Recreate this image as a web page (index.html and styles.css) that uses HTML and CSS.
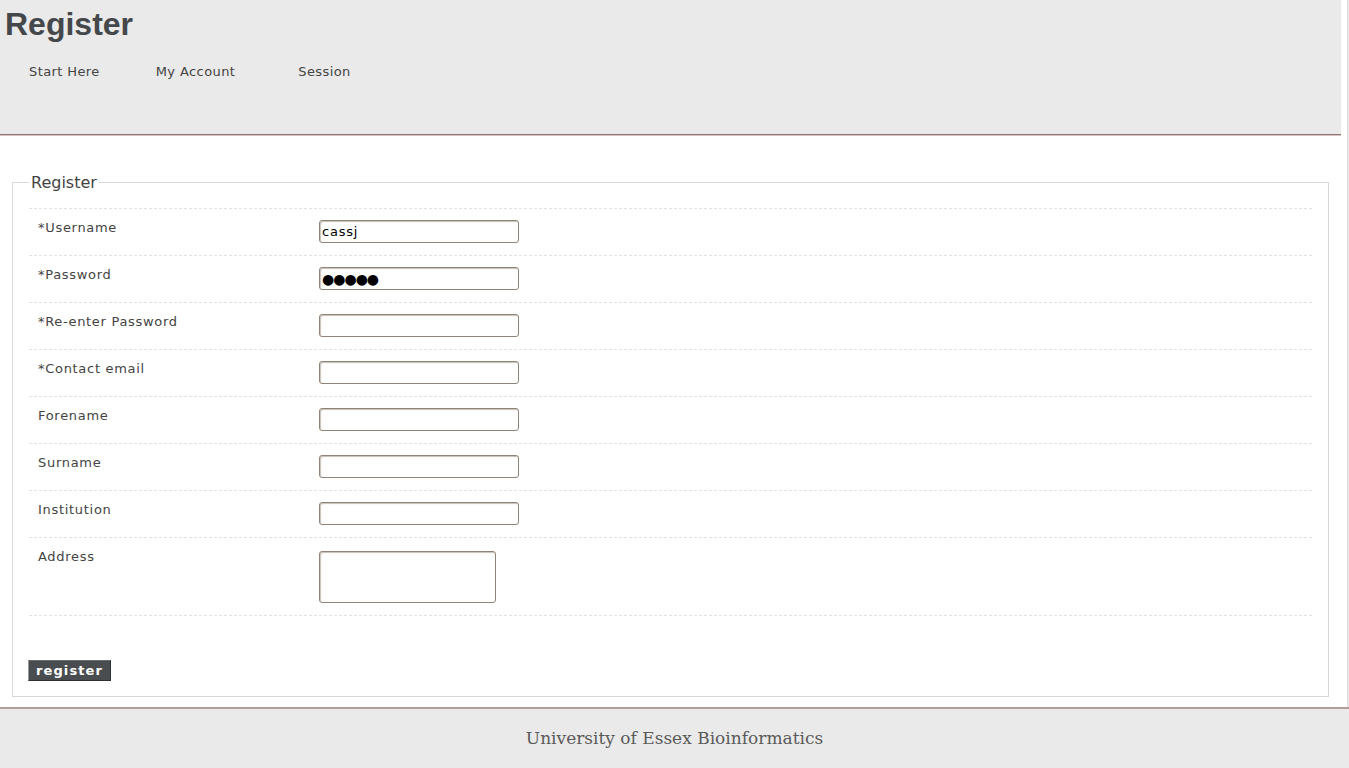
FILE: index.html
```html
<!DOCTYPE html>
<html lang="en">
<head>
<meta charset="utf-8">
<title>Register</title>
<link rel="stylesheet" href="styles.css">
</head>
<body>
<div class="page">
  <header class="masthead">
    <h1 class="site-title">Register</h1>
    <nav class="nav">
      <a class="nav-item" href="#">Start Here</a>
      <a class="nav-item nav-account" href="#">My Account</a>
      <a class="nav-item nav-session" href="#">Session</a>
    </nav>
  </header>
  <main class="content">
    <form class="register-form" onsubmit="return false">
      <fieldset class="panel">
        <legend class="panel-title">Register</legend>
        <div class="rows">
          <div class="row"><label class="row-label" for="u">*Username</label><input class="field" id="u" type="text" value="cassj"></div>
          <div class="row"><label class="row-label" for="p">*Password</label><input class="field field-pass" id="p" type="text" value="●●●●●"></div>
          <div class="row"><label class="row-label" for="p2">*Re-enter Password</label><input class="field" id="p2" type="text"></div>
          <div class="row"><label class="row-label" for="e">*Contact email</label><input class="field" id="e" type="text"></div>
          <div class="row"><label class="row-label" for="f">Forename</label><input class="field" id="f" type="text"></div>
          <div class="row"><label class="row-label" for="s">Surname</label><input class="field" id="s" type="text"></div>
          <div class="row"><label class="row-label" for="i">Institution</label><input class="field" id="i" type="text"></div>
          <div class="row row-last"><label class="row-label" for="a">Address</label><textarea class="area" id="a"></textarea></div>
        </div>
        <button class="submit" type="submit">register</button>
      </fieldset>
    </form>
  </main>
</div>
<footer class="footer">University of Essex Bioinformatics</footer>
</body>
</html>
```

FILE: styles.css
```css
html, body {
  margin: 0;
  padding: 0;
  background: #eaeaea;
}
body {
  font-family: "DejaVu Sans", sans-serif;
  color: #444;
}
.page {
  background: #fff;
  border-right: 1px solid #dcdcdc;
  width: 1348px;
  box-sizing: border-box;
}
.masthead {
  background: #eaeaea;
  height: 134px;
  margin-right: 6px;
  border-bottom: 1px solid #8f7676;
  box-shadow: 0 1px 0 #d8c4c4;
}
.site-title {
  margin: 0;
  padding: 6px 0 0 5px;
  font-family: "Liberation Sans", Arial, sans-serif;
  font-weight: bold;
  font-size: 32px;
  line-height: 37px;
  color: #45484b;
}
.nav {
  display: flex;
  margin: 19px 0 0 29px;
  line-height: 20px;
}
.nav-item {
  font-size: 13px;
  letter-spacing: 0.4px;
  color: #444;
  text-decoration: none;
}
.nav-account { margin-left: 56px; }
.nav-session { margin-left: 63px; }
.content {
  padding: 38px 18px 10px 12px;
}
.register-form { margin: 0; }
.panel {
  margin: 0;
  padding: 0 16px 15px 16px;
  border: 1px solid #d8d8d8;
}
.panel-title {
  padding: 0 2px;
  font-size: 16px;
  line-height: 19px;
  color: #444;
}
.rows {
  margin-top: 16px;
  margin-bottom: 44px;
  border-bottom: 1px dashed #e2e2e2;
}
.row {
  display: flex;
  align-items: flex-start;
  border-top: 1px dashed #e2e2e2;
  padding: 11px 0 12px 0;
}
.row-label {
  width: 281px;
  padding-left: 9px;
  font-size: 13px;
  letter-spacing: 0.7px;
  line-height: 16px;
  color: #444;
}
.field {
  width: 200px;
  height: 23px;
  box-sizing: border-box;
  margin: 0;
  padding: 1px 2px;
  border: 1px solid #8e8478;
  border-radius: 3px;
  box-shadow: inset 1px 1px 1px #c8c0b8;
  font-family: "DejaVu Sans", sans-serif;
  font-size: 13px;
  letter-spacing: 0.8px;
  color: #000;
  background: #fff;
}
.field-pass {
  font-size: 14px;
  letter-spacing: -1px;
  padding-left: 2px;
}
.area {
  display: block;
  width: 177px;
  height: 52px;
  box-sizing: border-box;
  margin: 2px 0 0 0;
  border: 1px solid #8e8478;
  border-radius: 3px;
  box-shadow: inset 1px 1px 1px #c8c0b8;
  resize: none;
  background: #fff;
}
.submit {
  display: block;
  width: 83px;
  height: 21px;
  margin: 0 0 0 -1px;
  padding: 0;
  background: #4a4d50;
  color: #fff;
  font-family: "DejaVu Sans", sans-serif;
  font-weight: bold;
  font-size: 13px;
  letter-spacing: 1.1px;
  border: 1px solid #2e3032;
  border-left-color: #9a9a9a;
  border-top-color: #6a6d70;
  line-height: 17px;
}
.footer {
  border-top: 2px solid #b39c9c;
  background: #eaeaea;
  height: 61px;
  box-sizing: border-box;
  text-align: center;
  font-family: "DejaVu Serif", serif;
  font-size: 17px;
  line-height: 58px;
  color: #5a5a5a;
}
```
